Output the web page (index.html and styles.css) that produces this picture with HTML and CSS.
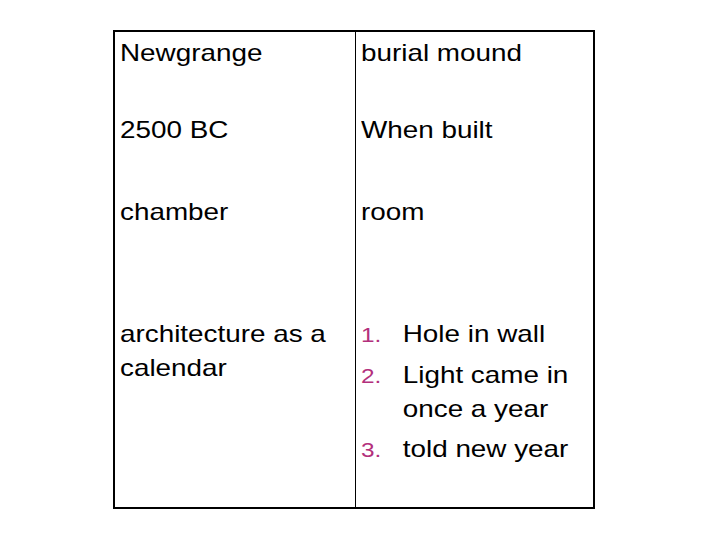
FILE: index.html
```html
<!DOCTYPE html>
<html>
<head>
<meta charset="utf-8">
<link rel="stylesheet" href="styles.css">
</head>
<body>
<div class="sheet">
  <div class="cell left"><div class="s">Newgrange</div></div>
  <div class="cell right"><div class="s">burial mound</div></div>
  <div class="cell left"><div class="s">2500 BC</div></div>
  <div class="cell right"><div class="s">When built</div></div>
  <div class="cell left"><div class="s">chamber</div></div>
  <div class="cell right"><div class="s">room</div></div>
  <div class="cell left"><div class="s">architecture as a calendar</div></div>
  <div class="cell right">
    <div class="s">
      <ol class="list">
        <li><span class="num">1.</span><span class="txt">Hole in wall</span></li>
        <li><span class="num">2.</span><span class="txt">Light came in once a year</span></li>
        <li><span class="num">3.</span><span class="txt">told new year</span></li>
      </ol>
    </div>
  </div>
</div>
</body>
</html>
```
FILE: styles.css
```css
html, body {
  margin: 0;
  padding: 0;
  background: #fff;
}
body {
  font-family: "Liberation Sans", Arial, sans-serif;
  color: #000;
}
.sheet {
  margin: 30px 0 0 113px;
  width: 478px;
  border: 2px solid #000;
  display: grid;
  grid-template-columns: 241px 237px;
  grid-template-rows: 77px 82px 122px 194px;
}
.cell {
  font-size: 24px;
  line-height: 34px;
  padding-top: 4px;
  box-sizing: border-box;
}
.left {
  border-right: 1px solid #000;
  padding-left: 5px;
  padding-right: 4px;
}
.right {
  padding-left: 5px;
  padding-right: 4px;
}
.s {
  width: 86.2%;
  transform: scaleX(1.16);
  transform-origin: 0 0;
}
.list {
  list-style: none;
  margin: 0;
  padding: 0;
}
.list li {
  display: flex;
  align-items: baseline;
  margin-bottom: 6px;
}
.num {
  flex: 0 0 36px;
  font-size: 21px;
  color: #b3307c;
}
.txt {
  flex: 1;
}
```
